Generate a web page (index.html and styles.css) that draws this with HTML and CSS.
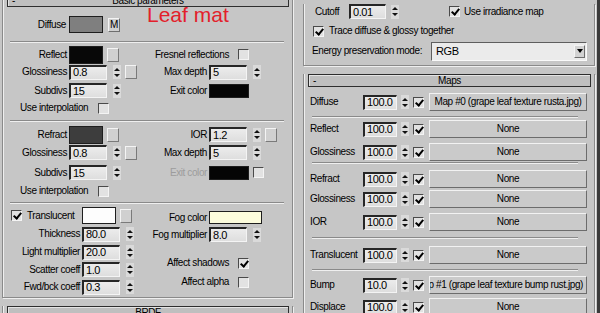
FILE: index.html
```html
<!DOCTYPE html>
<html lang="en">
<head>
    <meta charset="UTF-8">
    <title>Leaf mat - VRayMtl</title>
    <link rel="stylesheet" href="styles.css">
</head>
<body>
    <div class="screen">
        <div class="col-left">
            <div class="rollout rollout-basic">
                <div class="roll-head"><span class="roll-minus">-</span><span class="roll-title">Basic parameters</span><span></span></div>
                <div class="leaf-note">Leaf mat</div>

                <div class="diffuse-row">
                    <span class="diffuse-lbl">Diffuse</span>
                    <span class="sw sw-diffuse"></span>
                    <span class="m-btn">M</span>
                </div>

                <div class="sep"></div>

                <!-- reflection -->
                <div class="sect sect-reflect">
                    <span class="lbl">Reflect</span>
                    <div class="ctl"><span class="sw sw-big sw-black"></span><span class="mb"></span></div>
                    <div class="opt"><span>Fresnel reflections</span><span class="chk"></span></div>

                    <span class="lbl">Glossiness</span>
                    <div class="ctl"><span class="inp">0.8</span><span class="spin"></span><span class="mb"></span></div>
                    <span class="lbl">Max depth</span>
                    <div class="ctl"><span class="inp">5</span><span class="spin"></span></div>

                    <span class="lbl">Subdivs</span>
                    <div class="ctl"><span class="inp">15</span><span class="spin"></span></div>
                    <span class="lbl">Exit color</span>
                    <div class="ctl"><span class="sw sw-exit"></span></div>

                    <div class="interp"><span class="interp-lbl">Use interpolation</span><span class="chk"></span></div>
                </div>

                <div class="sep"></div>

                <!-- refraction -->
                <div class="sect sect-refract">
                    <span class="lbl">Refract</span>
                    <div class="ctl"><span class="sw sw-big sw-refract"></span><span class="mb"></span></div>
                    <span class="lbl">IOR</span>
                    <div class="ctl"><span class="inp">1.2</span><span class="spin"></span><span class="mb"></span></div>

                    <span class="lbl">Glossiness</span>
                    <div class="ctl"><span class="inp">0.8</span><span class="spin"></span><span class="mb"></span></div>
                    <span class="lbl">Max depth</span>
                    <div class="ctl"><span class="inp">5</span><span class="spin"></span></div>

                    <span class="lbl">Subdivs</span>
                    <div class="ctl"><span class="inp">15</span><span class="spin"></span></div>
                    <span class="lbl dim">Exit color</span>
                    <div class="ctl"><span class="sw sw-exit"></span><span class="chk exit-chk"></span></div>

                    <div class="interp"><span class="interp-lbl">Use interpolation</span><span class="chk"></span></div>
                </div>

                <div class="sep"></div>

                <!-- translucency -->
                <div class="sect-trans">
                    <div class="trans-left">
                        <div class="trow">
                            <span class="chk on trans-chk"></span>
                            <span class="trans-name">Translucent</span>
                            <span class="sw sw-trans"></span>
                            <span class="mb"></span>
                        </div>
                        <div class="trow"><span class="tlbl">Thickness</span><span class="inp">80.0</span><span class="spin"></span></div>
                        <div class="trow"><span class="tlbl">Light multiplier</span><span class="inp">20.0</span><span class="spin"></span></div>
                        <div class="trow"><span class="tlbl">Scatter coeff</span><span class="inp">1.0</span><span class="spin"></span></div>
                        <div class="trow"><span class="tlbl">Fwd/bck coeff</span><span class="inp">0.3</span><span class="spin"></span></div>
                    </div>
                    <div class="trans-right">
                        <div class="frow"><span class="flbl">Fog color</span><span class="sw sw-fog"></span></div>
                        <div class="frow"><span class="flbl">Fog multiplier</span><span class="inp">8.0</span><span class="spin"></span></div>
                        <div class="frow opt-row opt-shadows"><span>Affect shadows</span><span class="chk on"></span></div>
                        <div class="frow opt-row"><span>Affect alpha</span><span class="chk"></span></div>
                    </div>
                </div>
            </div>

            <div class="rollout rollout-brdf">
                <div class="roll-head"><span></span><span class="roll-title">BRDF</span><span></span></div>
            </div>
        </div>

        <div class="col-right">
            <div class="rollout rollout-top">
                <div class="cutoff-row">
                    <span class="cut-lbl">Cutoff</span>
                    <span class="inp inp-cut">0.01</span>
                    <span class="spin spin-cut"></span>
                    <span class="chk on irr-chk"></span>
                    <span class="irr-lbl">Use irradiance map</span>
                </div>
                <div class="trace-row">
                    <span class="chk on"></span>
                    <span class="trace-lbl">Trace diffuse &amp; glossy together</span>
                </div>
                <div class="energy-row">
                    <span class="energy-lbl">Energy preservation mode:</span>
                    <div class="sel"><span>RGB</span><span class="sel-btn"></span></div>
                </div>
            </div>

            <div class="rollout rollout-maps">
                <div class="roll-head"><span class="roll-minus">-</span><span class="roll-title">Maps</span><span></span></div>

                <div class="mrow t6">
                    <span class="mlbl">Diffuse</span><span class="inp inp-map">100.0</span><span class="spin"></span><span class="chk on"></span>
                    <span class="btn">Map #0 (grape leaf texture rusta.jpg)</span>
                </div>
                <div class="msep t5"></div>
                <div class="mrow t2">
                    <span class="mlbl">Reflect</span><span class="inp inp-map">100.0</span><span class="spin"></span><span class="chk on"></span>
                    <span class="btn">None</span>
                </div>
                <div class="mrow t5">
                    <span class="mlbl">Glossiness</span><span class="inp inp-map">100.0</span><span class="spin"></span><span class="chk on"></span>
                    <span class="btn">None</span>
                </div>
                <div class="msep t1"></div>
                <div class="mrow t6">
                    <span class="mlbl">Refract</span><span class="inp inp-map">100.0</span><span class="spin"></span><span class="chk on"></span>
                    <span class="btn">None</span>
                </div>
                <div class="mrow t2">
                    <span class="mlbl">Glossiness</span><span class="inp inp-map">100.0</span><span class="spin"></span><span class="chk on"></span>
                    <span class="btn">None</span>
                </div>
                <div class="mrow t5">
                    <span class="mlbl">IOR</span><span class="inp inp-map">100.0</span><span class="spin"></span><span class="chk on"></span>
                    <span class="btn">None</span>
                </div>
                <div class="msep t6"></div>
                <div class="mrow t7">
                    <span class="mlbl">Translucent</span><span class="inp inp-map">100.0</span><span class="spin"></span><span class="chk on"></span>
                    <span class="btn">None</span>
                </div>
                <div class="msep t5"></div>
                <div class="mrow t5">
                    <span class="mlbl">Bump</span><span class="inp inp-map">10.0</span><span class="spin"></span><span class="chk on"></span>
                    <span class="btn btn-clip"><span>Map #1 (grape leaf texture bump rust.jpg)</span></span>
                </div>
                <div class="mrow t4">
                    <span class="mlbl">Displace</span><span class="inp inp-map">100.0</span><span class="spin"></span><span class="chk on"></span>
                    <span class="btn">None</span>
                </div>
            </div>
        </div>
    </div>
</body>
</html>
```

FILE: styles.css
```css
:root {
    --panel: #c6c6c6;
    --field: #e4e4e4;
    --edge-dark: #8a8a8a;
    --edge-light: #efefef;
    --ink: #000;
}

* {
    margin: 0;
    padding: 0;
    box-sizing: border-box;
}

body {
    width: 600px;
    height: 313px;
    overflow: hidden;
    background: var(--panel);
    font-family: "Liberation Sans", Arial, sans-serif;
    font-size: 10px;
    letter-spacing: -0.4px;
    line-height: 1;
    color: var(--ink);
}

.screen {
    display: grid;
    grid-template-columns: 297px 303px;
    height: 313px;
    overflow: hidden;
}

.col-left {
    margin-top: -6px;
}

.col-right {
    padding-left: 6px;
    border-right: 3px solid #3a3a3a;
}

/* rollout frames */
.rollout {
    position: relative;
    border: 1px solid var(--edge-dark);
    border-top: none;
    box-shadow: inset 1px 0 var(--edge-light), 1px 1px var(--edge-light);
    padding: 0 1px;
}

.rollout-basic {
    margin-left: 2px;
    width: 291px;
    padding-bottom: 1px;
}

.rollout-brdf {
    margin-left: 2px;
    width: 291px;
    margin-top: 8px;
    border-bottom: none;
    height: 7px;
    overflow: hidden;
}

.rollout-top {
    width: 292px;
    padding-bottom: 4px;
}

.rollout-maps {
    width: 292px;
    margin-top: 8px;
    border-bottom: none;
    height: 239px;
    overflow: hidden;
}

.roll-head {
    height: 13px;
    margin: 0 2px 0 3px;
    border: 1px solid #2e2e2e;
    background: #bfbfbf;
    box-shadow: inset 1px 1px #e4e4e4;
    display: grid;
    grid-template-columns: 20px 1fr 20px;
    align-items: center;
}

.roll-minus {
    padding-left: 4px;
}

.roll-title {
    text-align: center;
}

.leaf-note {
    position: absolute;
    left: 144px;
    top: 13px;
    font-size: 21px;
    line-height: 15px;
    letter-spacing: 0;
    color: #e3202b;
}

/* shared controls */
.sw {
    display: block;
    flex: none;
    border: 1px solid #1e1e1e;
}

.sw-big {
    width: 34px;
    height: 18px;
}

.sw-black {
    background: #080808;
}

.sw-refract {
    background: #3d3d3d;
}

.sw-exit {
    width: 40px;
    height: 14px;
    background: #050505;
}

.sw-trans {
    width: 34px;
    height: 17px;
    margin-left: 2px;
    background: #fdfdfd;
}

.sw-fog {
    width: 53px;
    height: 13px;
    background: #fcfcdc;
}

.mb {
    display: block;
    flex: none;
    width: 12px;
    height: 14px;
    margin-left: 4px;
    background: #d0d0d0;
    border: 1px solid;
    border-color: #f4f4f4 #7a7a7a #7a7a7a #f4f4f4;
}

.inp {
    display: flex;
    align-items: center;
    flex: none;
    width: 38px;
    height: 15px;
    padding-left: 2px;
    font-size: 11px;
    background: linear-gradient(#ececec, #dedede);
    border-top: 2px solid #262626;
    border-left: 2px solid #262626;
    border-right: 1px solid #f4f4f4;
    border-bottom: 1px solid #f4f4f4;
}

.spin {
    display: flex;
    flex-direction: column;
    align-items: center;
    justify-content: center;
    gap: 3px;
    flex: none;
    width: 8px;
    height: 14px;
    margin-left: 6px;
    background: #dadada;
}

.spin::before {
    content: "";
    border-left: 3px solid transparent;
    border-right: 3px solid transparent;
    border-bottom: 3px solid #111;
}

.spin::after {
    content: "";
    border-left: 3px solid transparent;
    border-right: 3px solid transparent;
    border-top: 3px solid #111;
}

.chk {
    position: relative;
    display: block;
    flex: none;
    width: 11px;
    height: 11px;
    background: #e2e2e2;
    border: 1px solid;
    border-color: #4a4a4a #f4f4f4 #f4f4f4 #4a4a4a;
}

.chk.on::after {
    content: "";
    position: absolute;
    left: 3px;
    top: 0;
    width: 3px;
    height: 6px;
    border: solid #000;
    border-width: 0 2px 2px 0;
    transform: rotate(40deg);
}

.sep {
    height: 2px;
    margin: 0 7px 0 6px;
    border-top: 1px solid var(--edge-dark);
    border-bottom: 1px solid var(--edge-light);
}

/* basic parameters */
.diffuse-row {
    display: flex;
    align-items: center;
    height: 19px;
    margin-top: 8px;
    margin-bottom: 7px;
}

.diffuse-lbl {
    width: 62px;
    text-align: right;
}

.sw-diffuse {
    width: 34px;
    height: 17px;
    margin-left: 3px;
    background: #7f7f7f;
}

.m-btn {
    display: flex;
    align-items: center;
    justify-content: center;
    width: 12px;
    height: 14px;
    margin-left: 5px;
    background: #d0d0d0;
    border: 1px solid;
    border-color: #f4f4f4 #6e6e6e #6e6e6e #f4f4f4;
}

.sect {
    display: grid;
    grid-template-columns: 63px 81px 59px 84px;
    padding-top: 3px;
    margin-bottom: 4px;
}

.sect-reflect {
    grid-template-rows: 17px 18px 19px 16px;
}

.sect-refract {
    grid-template-rows: 19px 17px 23px 14px;
}

.lbl {
    justify-self: end;
    align-self: center;
}

.lbl.dim {
    color: #9c9c9c;
}

.ctl {
    display: flex;
    align-items: center;
    padding-left: 2px;
}

.opt {
    grid-column: 3 / 5;
    display: flex;
    align-items: center;
    justify-content: flex-end;
    gap: 9px;
    padding-right: 42px;
}

.interp {
    grid-column: 1 / 4;
    display: flex;
    align-items: center;
    padding-left: 16px;
}

.interp-lbl {
    width: 78px;
}

.exit-chk {
    margin-left: 4px;
}

.sect-trans {
    display: flex;
}

.trans-left {
    width: 144px;
    padding-top: 2px;
}

.trow {
    display: flex;
    align-items: center;
    height: 18px;
}

.trow:first-child {
    height: 19px;
}

.trow:nth-child(4) {
    height: 17px;
}

.trans-chk {
    margin-left: 7px;
}

.trans-name {
    width: 53px;
    margin-left: 5px;
}

.tlbl {
    width: 76px;
    margin-right: 2px;
    text-align: right;
}

.trans-right {
    flex: 1;
    padding-top: 5px;
}

.frow {
    display: flex;
    align-items: center;
    height: 17px;
}

.flbl {
    width: 59px;
    margin-right: 2px;
    text-align: right;
}

.opt-row {
    justify-content: flex-end;
    gap: 9px;
    height: 16px;
    margin-top: 3px;
    padding-right: 42px;
}

.opt-shadows {
    margin-top: 12px;
}

/* right column */
.cutoff-row {
    display: flex;
    align-items: center;
    height: 15px;
    margin-top: 4px;
    padding-left: 10px;
}

.cut-lbl {
    width: 34px;
}

.inp-cut {
    width: 37px;
}

.spin-cut {
    margin-left: 5px;
}

.irr-chk {
    margin-left: 50px;
}

.irr-lbl {
    margin-left: 4px;
}

.trace-row {
    display: flex;
    align-items: center;
    height: 14px;
    margin-top: 5px;
    padding-left: 8px;
}

.trace-lbl {
    margin-left: 5px;
}

.energy-row {
    display: flex;
    align-items: center;
    height: 20px;
    margin-top: 3px;
    padding-left: 7px;
}

.energy-lbl {
    width: 119px;
}

.sel {
    display: flex;
    align-items: center;
    width: 156px;
    height: 19px;
    padding-left: 4px;
    font-size: 11px;
    background: #ebebeb;
    border: 1px solid;
    border-color: #5e5e5e #fafafa #fafafa #5e5e5e;
}

.sel-btn {
    display: flex;
    align-items: center;
    justify-content: center;
    width: 11px;
    height: 13px;
    margin-left: auto;
    margin-right: 1px;
    background: #d2d2d2;
    border: 1px solid;
    border-color: #f4f4f4 #6e6e6e #6e6e6e #f4f4f4;
}

.sel-btn::after {
    content: "";
    border-left: 3px solid transparent;
    border-right: 3px solid transparent;
    border-top: 4px solid #000;
}

.mrow {
    display: flex;
    align-items: center;
    height: 18px;
    padding-left: 5px;
}

.mlbl {
    width: 53px;
}

.inp-map {
    width: 34px;
}

.mrow .spin {
    margin-left: 4px;
}

.mrow .chk {
    margin-left: 4px;
}

.btn {
    display: flex;
    align-items: center;
    justify-content: center;
    flex: none;
    width: 158px;
    height: 18px;
    margin-left: 5px;
    white-space: nowrap;
    overflow: hidden;
    background: #cacaca;
    border: 1px solid;
    border-color: #f2f2f2 #6c6c6c #6c6c6c #f2f2f2;
}

.btn-clip {
    justify-content: flex-end;
    padding-right: 3px;
}

.btn-clip span {
    flex: none;
}

.msep {
    height: 2px;
    margin: 0 15px 0 7px;
    border-top: 1px solid var(--edge-dark);
    border-bottom: 1px solid var(--edge-light);
}

.t1 { margin-top: 1px; }
.t2 { margin-top: 2px; }
.t4 { margin-top: 4px; }
.t5 { margin-top: 5px; }
.t6 { margin-top: 6px; }
.t7 { margin-top: 7px; }
```
